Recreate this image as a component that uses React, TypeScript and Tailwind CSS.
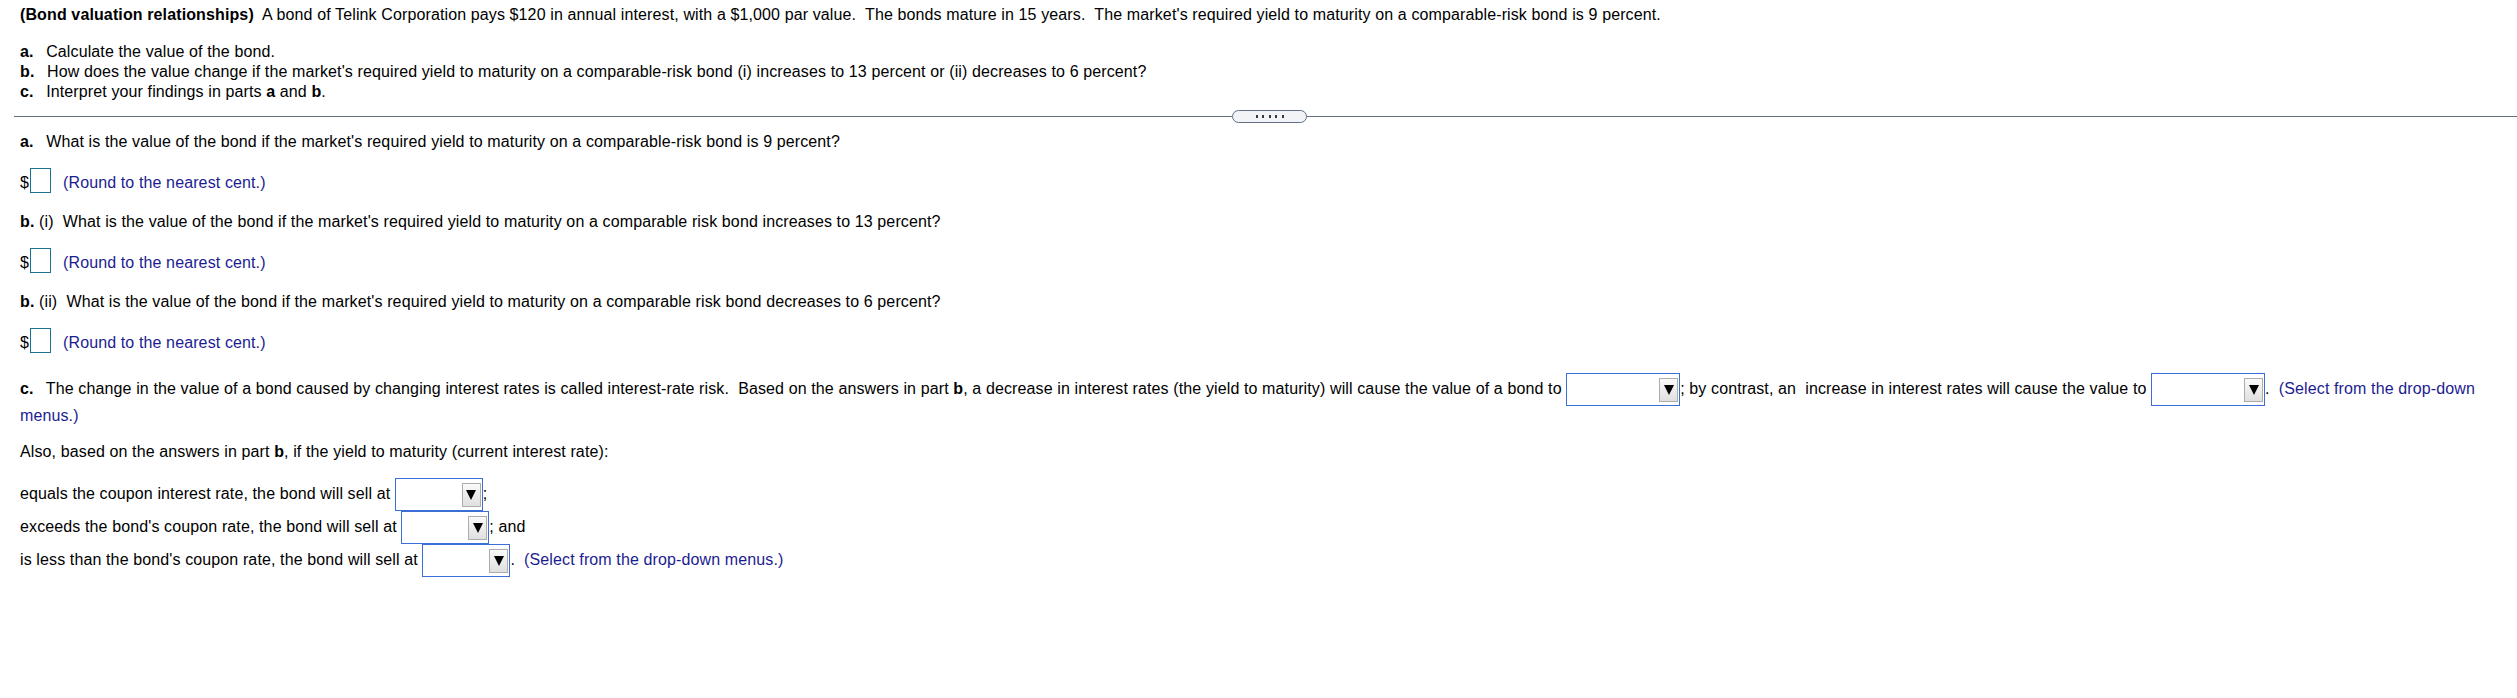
import React from "react";

// Pearson-style question page: bond valuation

function Dropdown({ className }: { className: string }) {
  return (
    <span
      className={`inline-flex h-[33px] items-center justify-end border border-[#3c6fd6] bg-white pr-px align-middle ${className}`}
    >
      <span className="flex h-[24px] w-[19px] items-center justify-center border border-[#acacac] bg-gradient-to-b from-[#fafafa] to-[#e0e0e0]">
        <svg width="10" height="11" viewBox="0 0 10 11">
          <path d="M0 1h10L5 11z" fill="#000" />
        </svg>
      </span>
    </span>
  );
}

function AnswerRow() {
  return (
    <div className="mt-[16px] flex h-[25px] items-end">
      <span>$</span>
      <span className="ml-px h-[25px] w-[21px] border border-[#1c7391] bg-white" />
      <span className="ml-3 text-[#1c1c91]">(Round to the nearest cent.)</span>
    </div>
  );
}

function Separator() {
  return (
    <div className="mt-[8px] flex h-[13px] items-center pl-[14px]">
      <div className="h-px w-[1218px] bg-[#5f6f81]" />
      <div className="flex h-[13px] w-[75px] items-center justify-center gap-[4.5px] rounded-full border border-[#5f6f81] bg-[#f1f3f6]">
        <span className="h-[3px] w-[2px] bg-[#2f3945]" />
        <span className="h-[3px] w-[2px] bg-[#2f3945]" />
        <span className="h-[3px] w-[2px] bg-[#2f3945]" />
        <span className="h-[3px] w-[2px] bg-[#2f3945]" />
        <span className="h-[3px] w-[2px] bg-[#2f3945]" />
      </div>
      <div className="h-px flex-1 bg-[#5f6f81]" />
    </div>
  );
}

export default function App() {
  return (
    <div className="min-h-[698px] w-full bg-white pt-[5px] font-['Liberation_Sans',Arial,sans-serif] text-[16px] leading-[20px] tracking-[0.12px] text-black">
      {/* Problem statement */}
      <div className="px-5">
        <p className="whitespace-nowrap">
          <b>(Bond valuation relationships)</b>
          {"\u00a0 "}A bond of Telink Corporation pays $120 in annual interest, with a $1,000 par value.
          {"\u00a0 "}The bonds mature in 15 years.{"\u00a0 "}The market's required yield to maturity on a
          comparable-risk bond is 9 percent.
        </p>

        <div className="mt-[17px]">
          <p>
            <b className="mr-2">a.</b> Calculate the value of the bond.
          </p>
          <p>
            <b className="mr-2">b.</b> How does the value change if the market's required yield to maturity on a
            comparable-risk bond (i) increases to 13 percent or (ii) decreases to 6 percent?
          </p>
          <p>
            <b className="mr-2">c.</b> Interpret your findings in parts <b>a</b> and <b>b</b>.
          </p>
        </div>
      </div>

      <Separator />

      {/* Answers */}
      <div className="mt-[9px] px-5">
        <p>
          <b className="mr-2">a.</b> What is the value of the bond if the market's required yield to maturity on a
          comparable-risk bond is 9 percent?
        </p>
        <AnswerRow />

        <p className="mt-[19px]">
          <b>b.</b> (i){"\u00a0 "}What is the value of the bond if the market's required yield to maturity on a
          comparable risk bond increases to 13 percent?
        </p>
        <AnswerRow />

        <p className="mt-[19px]">
          <b>b.</b> (ii){"\u00a0 "}What is the value of the bond if the market's required yield to maturity on a
          comparable risk bond decreases to 6 percent?
        </p>
        <AnswerRow />

        <p className="mt-[20px]">
          <b className="mr-2">c.</b> The change in the value of a bond caused by changing interest rates is called
          interest-rate risk.{"\u00a0 "}Based on the answers in part <b>b</b>, a decrease in interest rates (the
          yield to maturity) will cause the value of a bond to <Dropdown className="w-[114px]" />; by contrast,
          an{"\u00a0 "}increase in interest rates will cause the value to <Dropdown className="w-[114px]" />.
          {"\u00a0 "}
          <span className="text-[#1c1c91]">(Select from the drop-down menus.)</span>
        </p>

        <p className="mt-[16px]">
          Also, based on the answers in part <b>b</b>, if the yield to maturity (current interest rate):
        </p>

        <div className="mt-[16px]">
          <p>
            equals the coupon interest rate, the bond will sell at <Dropdown className="w-[88px]" />;
          </p>
          <p>
            exceeds the bond's coupon rate, the bond will sell at <Dropdown className="w-[88px]" />; and
          </p>
          <p>
            is less than the bond's coupon rate, the bond will sell at <Dropdown className="w-[88px]" />.
            {"\u00a0 "}
            <span className="text-[#1c1c91]">(Select from the drop-down menus.)</span>
          </p>
        </div>
      </div>
    </div>
  );
}
